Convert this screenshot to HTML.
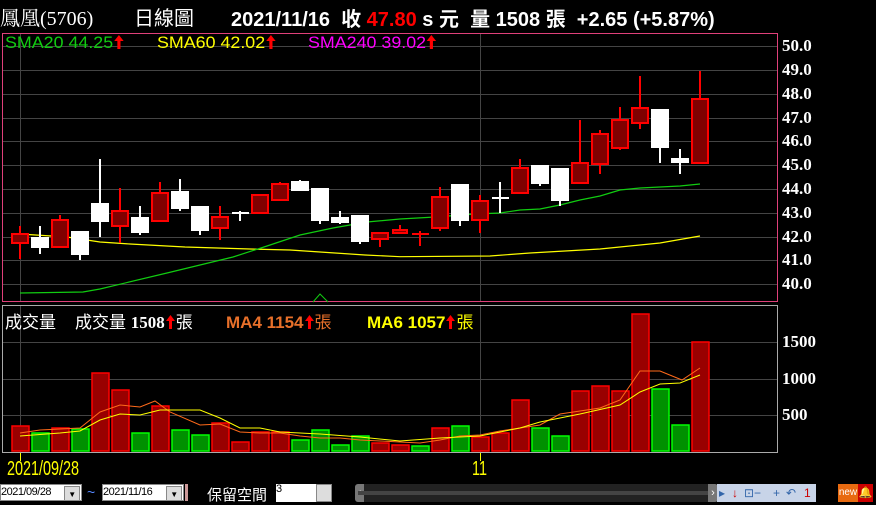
<!DOCTYPE html>
<html><head><meta charset="utf-8"><style>
body{margin:0;background:#000;width:876px;height:504px;overflow:hidden;position:relative;font-family:"Liberation Sans","Noto Sans CJK TC",sans-serif}
.a{position:absolute;white-space:nowrap}
.ar{display:inline-block;width:9px;height:14px;vertical-align:-1px;margin:0 1px}
</style></head><body>
<div class="a" style="left:0;top:2px;font-size:20px;color:#fff;font-family:'Liberation Serif','Noto Serif CJK SC',serif">鳳凰(5706)</div>
<div class="a" style="left:134px;top:2px;font-size:20px;color:#fff;font-family:'Liberation Sans','Noto Sans CJK TC',sans-serif">日線圖</div>
<div class="a" style="left:231px;top:3px;font-size:20px;color:#fff;font-weight:bold">2021/11/16&nbsp; 收 <span style="color:#f00">47.80</span> s 元&nbsp; 量 1508 張&nbsp; +2.65 (+5.87%)</div>

<svg class="a" style="left:0;top:0" width="876" height="504">
<rect x="2.5" y="33.5" width="775" height="268" fill="none" stroke="#e0407a"/>
<rect x="2.5" y="305.5" width="775" height="147" fill="none" stroke="#aaa"/>
<g stroke="#444" stroke-width="1">
<line x1="3" x2="777" y1="46.5" y2="46.5"/><line x1="3" x2="777" y1="70.5" y2="70.5"/><line x1="3" x2="777" y1="94.5" y2="94.5"/><line x1="3" x2="777" y1="118.5" y2="118.5"/><line x1="3" x2="777" y1="141.5" y2="141.5"/><line x1="3" x2="777" y1="165.5" y2="165.5"/><line x1="3" x2="777" y1="189.5" y2="189.5"/><line x1="3" x2="777" y1="213.5" y2="213.5"/><line x1="3" x2="777" y1="237.5" y2="237.5"/><line x1="3" x2="777" y1="260.5" y2="260.5"/><line x1="3" x2="777" y1="284.5" y2="284.5"/>
<line x1="3" x2="777" y1="342.5" y2="342.5"/><line x1="3" x2="777" y1="379.5" y2="379.5"/><line x1="3" x2="777" y1="415.5" y2="415.5"/>
<line x1="20.5" x2="20.5" y1="34" y2="301"/><line x1="480.5" x2="480.5" y1="34" y2="301"/>
<line x1="20.5" x2="20.5" y1="306" y2="452"/><line x1="480.5" x2="480.5" y1="306" y2="452"/>
</g>
<line x1="20.5" x2="20.5" y1="453" y2="461" stroke="#ff0"/><line x1="480.5" x2="480.5" y1="453" y2="461" stroke="#ff0"/>
<polyline fill="none" stroke="#ff0" stroke-width="1.2" points="20,234 67,237 100,242 130,244 185,247 250,249 290,250 320,252 365,255 400,256.7 490,256 530,253 600,249 660,243 700,236"/>
<polyline fill="none" stroke="#1c1" stroke-width="1.2" points="20,293 83,292 100,289 167,273 233,257 267,246 300,235 333,228 367,222 400,219 435,217 475,214 500,213 520,210 540,209 560,205 580,200 600,196 620,190 640,188 660,187 680,186 700,184"/>
<polyline fill="none" stroke="#1c1" points="313,302 320,294 328,302"/>
<g stroke-width="2">
<g stroke="#f00" fill="#800000">
<line x1="20" x2="20" y1="226" y2="259"/><rect x="12" y="234" width="16" height="9"/>
<line x1="60" x2="60" y1="215" y2="247"/><rect x="52" y="220" width="16" height="27"/>
<line x1="120" x2="120" y1="188" y2="243"/><rect x="112" y="211" width="16" height="15"/>
<line x1="160" x2="160" y1="182" y2="222"/><rect x="152" y="193" width="16" height="28"/>
<line x1="220" x2="220" y1="206" y2="240"/><rect x="212" y="217" width="16" height="11"/>
<line x1="260" x2="260" y1="194" y2="213"/><rect x="252" y="195" width="16" height="18"/>
<line x1="280" x2="280" y1="182" y2="201"/><rect x="272" y="184" width="16" height="16"/>
<line x1="380" x2="380" y1="233" y2="247"/><rect x="372" y="233" width="16" height="6"/>
<line x1="400" x2="400" y1="225" y2="233"/><rect x="393" y="230" width="14" height="3"/>
<line x1="420" x2="420" y1="231" y2="246"/><line x1="412" x2="429" y1="234" y2="234"/>
<line x1="440" x2="440" y1="187" y2="231"/><rect x="432" y="197" width="16" height="31"/>
<line x1="480" x2="480" y1="195" y2="233"/><rect x="472" y="201" width="16" height="19"/>
<line x1="520" x2="520" y1="159" y2="193"/><rect x="512" y="168" width="16" height="25"/>
<line x1="580" x2="580" y1="120" y2="183"/><rect x="572" y="163" width="16" height="20"/>
<line x1="600" x2="600" y1="130" y2="174"/><rect x="592" y="134" width="16" height="30"/>
<line x1="620" x2="620" y1="107" y2="150"/><rect x="612" y="120" width="16" height="28"/>
<line x1="640" x2="640" y1="76" y2="129"/><rect x="632" y="108" width="16" height="15"/>
<line x1="700" x2="700" y1="71" y2="163"/><rect x="692" y="99" width="16" height="64"/>
</g>
<g stroke="#fff" fill="#fff">
<line x1="40" x2="40" y1="226" y2="254"/><rect x="32" y="238" width="16" height="9"/>
<line x1="80" x2="80" y1="231" y2="260"/><rect x="72" y="232" width="16" height="22"/>
<line x1="100" x2="100" y1="159" y2="237"/><rect x="92" y="204" width="16" height="17"/>
<line x1="140" x2="140" y1="206" y2="235"/><rect x="132" y="218" width="16" height="14"/>
<line x1="180" x2="180" y1="179" y2="211"/><rect x="172" y="192" width="16" height="16"/>
<line x1="200" x2="200" y1="207" y2="235"/><rect x="192" y="207" width="16" height="23"/>
<line x1="240" x2="240" y1="211" y2="221"/><line x1="232" x2="249" y1="213" y2="213"/>
<line x1="300" x2="300" y1="180" y2="190"/><rect x="292" y="182" width="16" height="8"/>
<line x1="320" x2="320" y1="189" y2="224"/><rect x="312" y="189" width="16" height="31"/>
<line x1="340" x2="340" y1="211" y2="224"/><rect x="332" y="218" width="16" height="4"/>
<line x1="360" x2="360" y1="216" y2="244"/><rect x="352" y="216" width="16" height="25"/>
<line x1="460" x2="460" y1="185" y2="226"/><rect x="452" y="185" width="16" height="35"/>
<line x1="500" x2="500" y1="182" y2="213"/><line x1="492" x2="509" y1="198" y2="198"/>
<line x1="540" x2="540" y1="166" y2="186"/><rect x="532" y="166" width="16" height="17"/>
<line x1="560" x2="560" y1="169" y2="206"/><rect x="552" y="169" width="16" height="31"/>
<line x1="660" x2="660" y1="109" y2="163"/><rect x="652" y="110" width="16" height="37"/>
<line x1="680" x2="680" y1="149" y2="174"/><rect x="672" y="159" width="16" height="3"/>
</g>
</g>
<g stroke-width="1.5">
<g stroke="#f00" fill="#990000">
<rect x="12" y="426" width="17" height="25"/><rect x="52" y="428" width="17" height="23"/><rect x="92" y="373" width="17" height="78"/><rect x="112" y="390" width="17" height="61"/><rect x="152" y="406" width="17" height="45"/><rect x="212" y="423" width="17" height="28"/><rect x="232" y="442" width="17" height="9"/><rect x="252" y="432" width="17" height="19"/><rect x="272" y="432" width="17" height="19"/><rect x="372" y="443" width="17" height="8"/><rect x="392" y="445" width="17" height="6"/><rect x="432" y="428" width="17" height="23"/><rect x="472" y="437" width="17" height="14"/><rect x="492" y="433" width="17" height="18"/><rect x="512" y="400" width="17" height="51"/><rect x="572" y="391" width="17" height="60"/><rect x="592" y="386" width="17" height="65"/><rect x="612" y="391" width="17" height="60"/><rect x="632" y="314" width="17" height="137"/><rect x="692" y="342" width="17" height="109"/>
</g>
<g stroke="#0f0" fill="#009000">
<rect x="32" y="433" width="17" height="18"/><rect x="72" y="429" width="17" height="22"/><rect x="132" y="433" width="17" height="18"/><rect x="172" y="430" width="17" height="21"/><rect x="192" y="435" width="17" height="16"/><rect x="292" y="440" width="17" height="11"/><rect x="312" y="430" width="17" height="21"/><rect x="332" y="445" width="17" height="6"/><rect x="352" y="436" width="17" height="15"/><rect x="412" y="446" width="17" height="5"/><rect x="452" y="426" width="17" height="25"/><rect x="532" y="428" width="17" height="23"/><rect x="552" y="436" width="17" height="15"/><rect x="652" y="389" width="17" height="62"/><rect x="672" y="425" width="17" height="26"/>
</g>
</g>
<polyline fill="none" stroke="#ff6a1a" points="20,433 40,430 60,429 80,428 100,412 120,405 140,407 155,401 170,412 200,425 220,424 240,432 260,433 280,433 300,436 320,438 340,438 360,440 380,441 400,442 420,443 440,440 460,436 480,435 500,431 520,428 540,425 560,414 580,411 600,408 620,400 640,371 660,371 682,380 700,368"/>
<polyline fill="none" stroke="#ff0" points="20,436 60,433 80,431 100,420 120,414 140,415 160,410 200,410 220,418 240,428 260,428 280,432 320,434 360,437 400,441 440,438 480,436 500,432 520,428 540,422 580,414 620,405 640,392 660,384 680,383 700,375"/>
</svg>

<div class="a" style="left:5px;top:33px;font-size:17px;color:#1c1;transform:scaleX(1.05);transform-origin:0 0">SMA20 44.25<svg class="ar" viewBox="0 0 9 14"><path d="M4.5 0L0 6H3V14H6V6H9Z" fill="#f00"/></svg></div>
<div class="a" style="left:157px;top:33px;font-size:17px;color:#ff0;transform:scaleX(1.05);transform-origin:0 0">SMA60 42.02<svg class="ar" viewBox="0 0 9 14"><path d="M4.5 0L0 6H3V14H6V6H9Z" fill="#f00"/></svg></div>
<div class="a" style="left:308px;top:33px;font-size:17px;color:#f0f;transform:scaleX(1.05);transform-origin:0 0">SMA240 39.02<svg class="ar" viewBox="0 0 9 14"><path d="M4.5 0L0 6H3V14H6V6H9Z" fill="#f00"/></svg></div>

<div class="a" style="left:782px;top:0;font-family:'Liberation Serif',serif;font-weight:bold;font-size:17px;color:#fff;line-height:1">
<div style="position:absolute;top:37px">50.0</div><div style="position:absolute;top:61px">49.0</div><div style="position:absolute;top:85px">48.0</div><div style="position:absolute;top:109px">47.0</div><div style="position:absolute;top:132px">46.0</div><div style="position:absolute;top:156px">45.0</div><div style="position:absolute;top:180px">44.0</div><div style="position:absolute;top:204px">43.0</div><div style="position:absolute;top:228px">42.0</div><div style="position:absolute;top:251px">41.0</div><div style="position:absolute;top:275px">40.0</div>
<div style="position:absolute;top:333px">1500</div><div style="position:absolute;top:370px">1000</div><div style="position:absolute;top:406px">500</div>
</div>

<div class="a" style="left:5px;top:308px;font-size:17px;color:#fff">成交量</div>
<div class="a" style="left:75px;top:308px;font-size:17px;color:#fff">成交量 <b style="font-family:'Liberation Serif',serif">1508</b><svg class="ar" viewBox="0 0 9 14"><path d="M4.5 0L0 6H3V14H6V6H9Z" fill="#f00"/></svg>張</div>
<div class="a" style="left:226px;top:308px;font-size:17px;color:#e8702a"><b>MA4 1154</b><svg class="ar" viewBox="0 0 9 14"><path d="M4.5 0L0 6H3V14H6V6H9Z" fill="#f00"/></svg>張</div>
<div class="a" style="left:367px;top:308px;font-size:17px;color:#ff0"><b>MA6 1057</b><svg class="ar" viewBox="0 0 9 14"><path d="M4.5 0L0 6H3V14H6V6H9Z" fill="#f00"/></svg>張</div>

<div class="a" style="left:7px;top:458px;font-size:20px;color:#ff0;transform:scaleX(0.72);transform-origin:0 0">2021/09/28</div>
<div class="a" style="left:472px;top:458px;font-size:20px;color:#ff0;transform:scaleX(0.72);transform-origin:0 0">11</div>

<div class="a" style="left:0;top:484px;width:82px;height:17px;background:#fff;border:1px solid #888;box-sizing:border-box;font-size:11px;line-height:15px;letter-spacing:-0.5px">2021/09/28<div style="position:absolute;right:1px;top:1px;width:14px;height:13px;background:#ddd;border:1px solid #888;font-size:8px;text-align:center">▼</div></div>
<div class="a" style="left:87px;top:484px;color:#58f;font-size:14px">~</div>
<div class="a" style="left:102px;top:484px;width:82px;height:17px;background:#fff;border:1px solid #888;box-sizing:border-box;font-size:11px;line-height:15px;letter-spacing:-0.5px">2021/11/16<div style="position:absolute;right:1px;top:1px;width:14px;height:13px;background:#ddd;border:1px solid #888;font-size:8px;text-align:center">▼</div></div>
<div class="a" style="left:185px;top:484px;width:3px;height:17px;background:#c99"></div>
<div class="a" style="left:207px;top:484px;color:#fff;font-size:15px">保留空間</div>
<div class="a" style="left:276px;top:484px;width:56px;height:18px;background:#fff;font-size:11px;line-height:10px">3<div style="position:absolute;right:0;top:0;width:16px;height:18px;background:#ddd;border:1px solid #888;box-sizing:border-box"></div></div>
<div class="a" style="left:355px;top:484px;width:363px;height:18px;background:#222;border-radius:3px;overflow:hidden"><div style="position:absolute;left:0;top:0;width:9px;height:18px;background:#777;color:#fff;font-size:11px;line-height:18px;text-align:center">‹</div><div style="position:absolute;left:3px;right:3px;top:7px;height:4px;background:#444"></div><div style="position:absolute;right:0;top:0;width:10px;height:18px;background:#777;color:#fff;font-size:11px;line-height:18px;text-align:center">›</div></div>
<div class="a" style="left:717px;top:484px;width:99px;height:18px;background:#c8d4e8;font-size:12px;line-height:18px;color:#36a">
<span style="position:absolute;left:2px">▸</span><span style="position:absolute;left:15px;color:#c00">↓</span><span style="position:absolute;left:27px">⊡−</span><span style="position:absolute;left:56px">+</span><span style="position:absolute;left:69px">↶</span><span style="position:absolute;left:87px;color:#c00">1</span></div>
<div class="a" style="left:838px;top:484px;width:20px;height:18px;background:#e86a10;color:#fff;font-size:10px;line-height:18px;text-align:center">new</div>
<div class="a" style="left:858px;top:484px;width:15px;height:18px;background:#c00;color:#fc0;font-size:11px;line-height:18px;text-align:center">🔔</div>
</body></html>
